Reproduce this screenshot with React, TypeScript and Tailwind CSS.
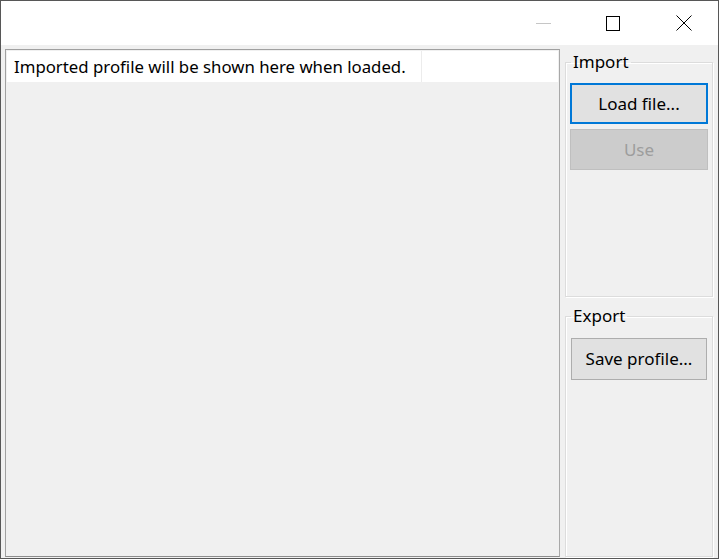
import React from 'react';

const font = { fontFamily: '"Noto Sans", "Open Sans", sans-serif' };

const TitleBar: React.FC = () => (
    <div className="h-[44px] bg-white flex items-center justify-end shrink-0">
        <div className="w-[70px] h-full flex items-center justify-center">
            <div className="w-[15px] h-px bg-[#c6c6c6] mt-[1px]"></div>
        </div>
        <div className="w-[70px] h-full flex items-center justify-center">
            <div className="w-[14px] h-[15px] border border-black"></div>
        </div>
        <div className="w-[70px] h-full flex items-center justify-center pl-[2px]">
            <svg width="16" height="16" viewBox="0 0 16 16">
                <path d="M0.5 0.5 L15.5 15.5 M15.5 0.5 L0.5 15.5" stroke="#000" strokeWidth="1" fill="none" />
            </svg>
        </div>
    </div>
);

const GroupBox: React.FC<{ title: string; className?: string; children?: React.ReactNode }> = ({ title, className, children }) => (
    <fieldset className={`border border-[#dcdcdc] shadow-[inset_1px_1px_0_#fff,1px_1px_0_#fff] px-[4px] ${className ?? ''}`}>
        <legend className="ml-[1px] px-[2px] text-[17px] leading-[20px] text-black">{title}</legend>
        {children}
    </fieldset>
);

const App: React.FC = () => {
    return (
        <div className="w-[719px] h-[559px] border border-[#575757] flex flex-col bg-[#f0f0f0] overflow-hidden" style={font}>
            <TitleBar />
            <div className="flex-1 flex gap-[5px] pl-[4px] pr-[5px] pt-[4px] pb-[1px] min-h-0">
                <div className="w-[555px] h-[508px] border border-[#a0a0a0] border-b-[#8c8c8c] border-r-[#a8a8a8] bg-[#f0f0f0] p-px">
                    <div className="flex h-[31px] bg-white">
                        <div className="w-[415px] border-r border-[#ececec] flex items-center pl-[7px] text-[16.8px] text-black whitespace-nowrap">
                            Imported profile will be shown here when loaded.
                        </div>
                        <div className="flex-1"></div>
                    </div>
                </div>
                <div className="flex-1 flex flex-col pt-[3px]">
                    <GroupBox title="Import" className="h-[245px]">
                        <div className="flex flex-col gap-[5px] mt-[11px]">
                            <button className="h-[41px] w-[138px] border-2 border-[#0078d7] bg-[#e1e1e1] text-[17px] text-black">
                                Load file...
                            </button>
                            <button disabled className="h-[41px] w-[138px] bg-[#cccccc] border border-[#bfbfbf] text-[17px] text-[#9d9d9d]">
                                Use
                            </button>
                        </div>
                    </GroupBox>
                    <GroupBox title="Export" className="mt-[9px] flex-1">
                        <button className="h-[42px] w-[136px] ml-px mt-[12px] bg-[#e1e1e1] border border-[#adadad] text-[17px] text-black">
                            Save profile...
                        </button>
                    </GroupBox>
                </div>
            </div>
        </div>
    );
};

export default App;
